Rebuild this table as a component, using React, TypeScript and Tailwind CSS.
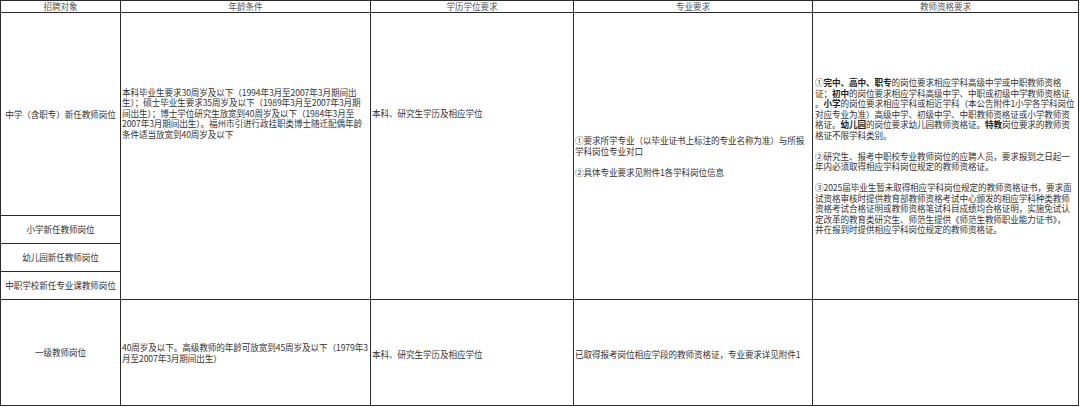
import type { ReactNode } from 'react';

function Lines({ rows }: { rows: ReactNode[] }) {
    return (
        <div>
            {rows.map((row, i) => (
                <div key={i} className="whitespace-nowrap h-[10.5px]">
                    {row}
                </div>
            ))}
        </div>
    );
}

const B = ({ children }: { children: ReactNode }) => <span className="font-bold text-[#222]">{children}</span>;

export default function App() {
    const head = "flex items-center justify-center bg-white text-[#555] leading-none";
    const label = "flex items-center justify-center bg-white whitespace-nowrap";
    const cell = "flex flex-col justify-center bg-white overflow-hidden";

    return (
        <div className="w-[1080px] h-[407px] bg-white">
            <div className="grid w-fit grid-cols-[119px_249px_202px_238px_265px] grid-rows-[11px_202px_27px_27px_27px_105px] gap-px bg-[#2b2b2b] p-px font-['Noto_Sans_CJK_SC',sans-serif] text-[8.6px] leading-[10.5px] tracking-[-0.1px] text-[#333]">
                <div className={head}>招聘对象</div>
                <div className={head}>年龄条件</div>
                <div className={head}>学历学位要求</div>
                <div className={head}>专业要求</div>
                <div className={head}>教师资格要求</div>

                <div className={label}>中学（含职专）新任教师岗位</div>
                <div className={`${cell} row-span-4 pl-px pb-[86px]`}>
                    <Lines
                        rows={[
                            '本科毕业生要求30周岁及以下（1994年3月至2007年3月期间出',
                            '生）；硕士毕业生要求35周岁及以下（1989年3月至2007年3月期',
                            '间出生）；博士学位研究生放宽到40周岁及以下（1984年3月至',
                            '2007年3月期间出生）。福州市引进行政挂职类博士随迁配偶年龄',
                            '条件适当放宽到40周岁及以下',
                        ]}
                    />
                </div>
                <div className={`${cell} row-span-4 pl-px pb-[86px]`}>
                    <Lines rows={['本科、研究生学历及相应学位']} />
                </div>
                <div className={`${cell} row-span-4 pl-px`}>
                    <Lines
                        rows={[
                            '①要求所学专业（以毕业证书上标注的专业名称为准）与所报',
                            '学科岗位专业对口',
                            '',
                            '②具体专业要求见附件1各学科岗位信息',
                        ]}
                    />
                </div>
                <div className={`${cell} row-span-4 pl-[2px]`}>
                    <Lines
                        rows={[
                            <>①<B>完中、高中、职专</B>的岗位要求相应学科高级中学或中职教师资格</>,
                            <>证；<B>初中</B>的岗位要求相应学科高级中学、中职或初级中学教师资格证</>,
                            <>。<B>小学</B>的岗位要求相应学科或相近学科（本公告附件1小学各学科岗位</>,
                            '对应专业为准）高级中学、初级中学、中职教师资格证或小学教师资',
                            <>格证。<B>幼儿园</B>的岗位要求幼儿园教师资格证。<B>特教</B>岗位要求的教师资</>,
                            '格证不限学科类别。',
                            '',
                            '②研究生、报考中职校专业教师岗位的应聘人员，要求报到之日起一',
                            '年内必须取得相应学科岗位规定的教师资格证。',
                            '',
                            '③2025届毕业生暂未取得相应学科岗位规定的教师资格证书，要求面',
                            '试资格审核时提供教育部教师资格考试中心颁发的相应学科种类教师',
                            '资格考试合格证明或教师资格笔试科目成绩均合格证明，实施免试认',
                            '定改革的教育类研究生、师范生提供《师范生教师职业能力证书》，',
                            '并在报到时提供相应学科岗位规定的教师资格证。',
                        ]}
                    />
                </div>

                <div className={label}>小学新任教师岗位</div>
                <div className={label}>幼儿园新任教师岗位</div>
                <div className={label}>中职学校新任专业课教师岗位</div>

                <div className={label}>一级教师岗位</div>
                <div className={`${cell} pl-px`}>
                    <Lines
                        rows={[
                            '40周岁及以下。高级教师的年龄可放宽到45周岁及以下（1979年3',
                            '月至2007年3月期间出生）',
                        ]}
                    />
                </div>
                <div className={`${cell} pl-px pt-[4px]`}>
                    <Lines rows={['本科、研究生学历及相应学位']} />
                </div>
                <div className={`${cell} pl-px pt-[4px]`}>
                    <Lines rows={['已取得报考岗位相应学段的教师资格证，专业要求详见附件1']} />
                </div>
                <div className="bg-white" />
            </div>
        </div>
    );
}
